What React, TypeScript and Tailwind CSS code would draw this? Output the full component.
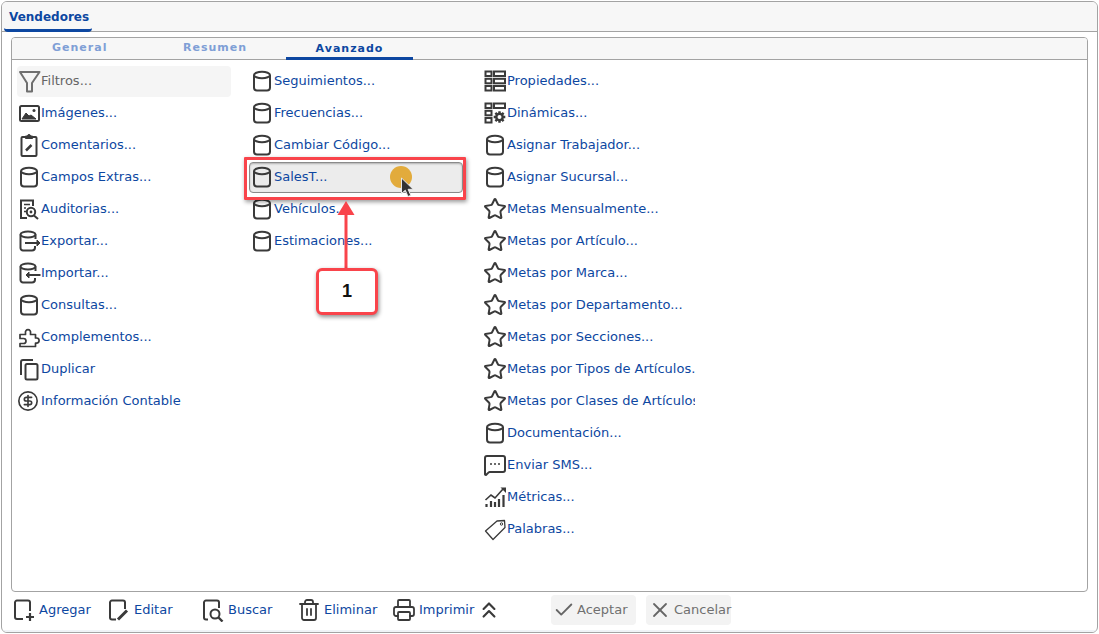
import type { ReactNode } from 'react';
import { ChevronsUp, Check, X, Printer, Trash2, CircleDollarSign, MessageSquareMore, Star } from 'lucide-react';

const ink = '#3a3a3a';

function Svg({ children, size = 24, color = ink }: { children: ReactNode; size?: number; color?: string }) {
    return (
        <svg width={size} height={size} viewBox="0 0 24 24" fill="none" stroke={color} strokeWidth="2" className="shrink-0">
            {children}
        </svg>
    );
}

const Cylinder = () => (
    <Svg>
        <ellipse cx="12" cy="6" rx="8" ry="3.2" />
        <path d="M4 6v12.5a3 3 0 0 0 3 3h10a3 3 0 0 0 3-3V6" />
    </Svg>
);

const Funnel = () => (
    <Svg color="#6f6f6f">
        <path d="M3 3h19.5l-7.5 11v8.5h-5V14z" strokeLinejoin="round" />
    </Svg>
);

const ImageIcon = () => (
    <Svg>
        <rect x="3" y="5" width="19" height="15" rx="1.5" />
        <path d="M5 18l4-6 3 3 2-1 5 4z" fill={ink} strokeWidth="1" />
        <circle cx="17" cy="9.5" r="1.5" fill={ink} stroke="none" />
    </Svg>
);

const Clipboard = () => (
    <Svg>
        <path d="M8 4H5.5a1 1 0 0 0-1 1v17a1 1 0 0 0 1 1h13a1 1 0 0 0 1-1V5a1 1 0 0 0-1-1H16" />
        <path d="M8.5 5.5V3h2a1.5 1.5 0 0 1 3 0h2v2.5z" fill={ink} strokeWidth="1" />
        <path d="M9 17.5l5.5-5.5" strokeWidth="2.5" />
    </Svg>
);

const Audit = () => (
    <Svg>
        <path d="M10 21H4V3.5h12V9" strokeWidth="2" />
        <path d="M7 7.5h6M7 11h2M7 14.5h2" strokeWidth="1.5" />
        <circle cx="14" cy="15" r="4.2" />
        <circle cx="14" cy="15" r="1.4" fill={ink} stroke="none" />
        <path d="M17 18.5l4 3.5" />
    </Svg>
);

const ExportIcon = () => (
    <Svg>
        <ellipse cx="11" cy="5.5" rx="7.5" ry="3" />
        <path d="M3.5 5.5V19a2.5 2.5 0 0 0 2.5 2.5h9a3 3 0 0 0 3-3V17M18.5 5.5V10M3.5 5.5" />
        <path d="M8 14h13.5" strokeWidth="2" />
        <path d="M20 11l3 3-3 3z" fill={ink} strokeWidth="1" />
    </Svg>
);

const ImportIcon = () => (
    <Svg>
        <ellipse cx="11" cy="5.5" rx="7.5" ry="3" />
        <path d="M3.5 5.5V19a2.5 2.5 0 0 0 2.5 2.5h9a3 3 0 0 0 3-3V17M18.5 5.5V10" />
        <path d="M10 14h13.5" />
        <path d="M12 11l-3 3 3 3z" fill={ink} strokeWidth="1" />
    </Svg>
);

const PuzzleIcon = () => (
    <Svg>
        <path
            d="M3 13.5V9.5h5.5V8A2.6 2.6 0 1 1 13.5 8v1.5h5v3.5h1a2.6 2.6 0 0 1 0 5.2h-1V21.5H3v-3h3.5a2.3 2.3 0 0 0 0-5z"
            strokeWidth="1.7"
            strokeLinejoin="round"
        />
    </Svg>
);

const Duplicate = () => (
    <Svg>
        <path d="M4 18V5a2 2 0 0 1 2-2h10" />
        <rect x="8.5" y="7" width="12" height="15.5" rx="1.5" />
    </Svg>
);

const Props = () => (
    <Svg>
        <rect x="2.5" y="2.5" width="6" height="4.5" strokeWidth="2" />
        <rect x="11" y="2.5" width="11" height="4.5" strokeWidth="2" />
        <rect x="2.5" y="9.8" width="6" height="4.5" strokeWidth="2" />
        <rect x="11" y="9.8" width="11" height="4.5" strokeWidth="2" />
        <rect x="2.5" y="17" width="6" height="4.5" strokeWidth="2" />
        <rect x="11" y="17" width="11" height="4.5" strokeWidth="2" />
    </Svg>
);

const Dynamics = () => (
    <Svg>
        <rect x="2.5" y="2.5" width="6" height="4.5" strokeWidth="2" />
        <rect x="11" y="2.5" width="11" height="4.5" strokeWidth="2" />
        <rect x="2.5" y="9.8" width="6" height="4.5" strokeWidth="2" />
        <rect x="2.5" y="17" width="6" height="4.5" strokeWidth="2" />
        <circle cx="16.5" cy="16" r="3.2" strokeWidth="2.4" />
        <path
            d="M16.5 10.2v2.4M16.5 19.4v2.4M10.7 16h2.4M19.9 16h2.4M12.4 11.9l1.7 1.7M18.9 18.4l1.7 1.7M12.4 20.1l1.7-1.7M18.9 13.6l1.7-1.7"
            strokeWidth="2.4"
        />
    </Svg>
);

const Metrics = () => (
    <Svg>
        <path d="M3.5 22v-3M8 22v-6M12 22v-5M16 22v-8M20.5 22V10" strokeWidth="2.2" />
        <path d="M2.5 15l5.5-5 4 3 8-9" strokeWidth="1.6" />
        <path d="M17.5 2.5H23V8z" fill={ink} stroke="none" />
    </Svg>
);

const Tag = () => (
    <Svg>
        <path d="M2.5 14L14 4l7.5-.5.5 7L10 22.5z" strokeWidth="1.3" strokeLinejoin="round" />
        <circle cx="18.5" cy="7" r="1.2" strokeWidth="1" />
    </Svg>
);

const Add = () => (
    <Svg>
        <path d="M11 21H5a2 2 0 0 1-2-2V4.500a2 2 0 0 1 2-2h11a2 2 0 0 1 2 2V13" />
        <path d="M18 15v8M14 19h8" strokeWidth="2.2" />
    </Svg>
);

const Edit = () => (
    <Svg>
        <path d="M9 21.500H5a2 2 0 0 1-2-2V4.500a2 2 0 0 1 2-2h11a2 2 0 0 1 2 2V11" />
        <path d="M11 21.500l9-9" strokeWidth="3" />
    </Svg>
);

const Search = () => (
    <Svg>
        <path d="M7 21.500H5a2 2 0 0 1-2-2V4.500a2 2 0 0 1 2-2h11a2 2 0 0 1 2 2V10" />
        <circle cx="14" cy="16" r="4.500" />
        <path d="M17.500 19.500L21.500 23.500" strokeWidth="2.4" />
    </Svg>
);

type Item = { label: string; icon: ReactNode; state?: 'disabled' | 'hover'; clip?: boolean };

const star = <Star size={24} color={ink} strokeWidth={2} className="shrink-0" />;
const db = <Cylinder />;

const col1: Item[] = [
    { label: 'Filtros...', icon: <Funnel />, state: 'disabled' },
    { label: 'Imágenes...', icon: <ImageIcon /> },
    { label: 'Comentarios...', icon: <Clipboard /> },
    { label: 'Campos Extras...', icon: db },
    { label: 'Auditorias...', icon: <Audit /> },
    { label: 'Exportar...', icon: <ExportIcon /> },
    { label: 'Importar...', icon: <ImportIcon /> },
    { label: 'Consultas...', icon: db },
    { label: 'Complementos...', icon: <PuzzleIcon /> },
    { label: 'Duplicar', icon: <Duplicate /> },
    { label: 'Información Contable', icon: <CircleDollarSign size={22} color={ink} strokeWidth={1.8} className="shrink-0 mr-[2px]" /> },
];

const col2: Item[] = [
    { label: 'Seguimientos...', icon: db },
    { label: 'Frecuencias...', icon: db },
    { label: 'Cambiar Código...', icon: db },
    { label: 'SalesT...', icon: db, state: 'hover' },
    { label: 'Vehículos...', icon: db },
    { label: 'Estimaciones...', icon: db },
];

const col3: Item[] = [
    { label: 'Propiedades...', icon: <Props /> },
    { label: 'Dinámicas...', icon: <Dynamics /> },
    { label: 'Asignar Trabajador...', icon: db },
    { label: 'Asignar Sucursal...', icon: db },
    { label: 'Metas Mensualmente...', icon: star },
    { label: 'Metas por Artículo...', icon: star },
    { label: 'Metas por Marca...', icon: star },
    { label: 'Metas por Departamento...', icon: star },
    { label: 'Metas por Secciones...', icon: star },
    { label: 'Metas por Tipos de Artículos...', icon: star },
    { label: 'Metas por Clases de Artículos...', icon: star },
    { label: 'Documentación...', icon: db },
    { label: 'Enviar SMS...', icon: <MessageSquareMore size={24} color={ink} strokeWidth={2} className="shrink-0" /> },
    { label: 'Métricas...', icon: <Metrics /> },
    { label: 'Palabras...', icon: <Tag /> },
];

function MenuRow({ item }: { item: Item }) {
    let style = 'text-[#0d47a1]';
    if (item.state === 'disabled') style = 'text-[#666666] bg-[#f5f5f5] rounded-sm w-[210px]';
    if (item.state === 'hover') {
        style = 'text-[#0d47a1] bg-[#ececec] border border-[#8a8a8a] rounded-sm shadow-[inset_0_1px_2px_#b0b0b0] -ml-[1px]';
    }
    return (
        <div className="h-8 flex items-center">
            <div className={`h-[31px] w-full flex items-center overflow-hidden whitespace-nowrap ${style}`}>
                {item.icon}
                <span className="min-w-0">{item.label}</span>
            </div>
        </div>
    );
}

function ToolButton({ icon, label, width }: { icon: ReactNode; label: string; width: string }) {
    return (
        <div className={`flex items-center gap-[3px] shrink-0 text-[#0d47a1] ${width}`}>
            {icon}
            <span>{label}</span>
        </div>
    );
}

function ActionButton({ icon, label }: { icon: ReactNode; label: string }) {
    return (
        <div className="w-[85px] h-[30px] flex items-center gap-[2px] pl-[2px] bg-[#f3f3f3] rounded-sm text-[#707070] shrink-0">
            {icon}
            <span>{label}</span>
        </div>
    );
}

function Annotation() {
    return (
        <>
            <div className="absolute left-[244px] top-[157px] w-[222px] h-[43px] border-[3px] border-[#f9444b] rounded-[1px] shadow-[1px_2px_4px_rgba(0,0,0,0.4)]" />
            <svg className="absolute left-[332px] top-[198px]" width="28" height="74" viewBox="0 0 28 74">
                <path d="M12.500 16h3v56h-3z" fill="#f9444b" />
                <path d="M14 3l8.500 14H5.500z" fill="#f9444b" />
            </svg>
            <div className="absolute left-[316px] top-[268px] w-[62px] h-[47px] bg-white border-[3px] border-[#f9444b] rounded-md shadow-[1px_2px_4px_rgba(0,0,0,0.45)] flex items-center justify-center font-['Liberation_Sans',sans-serif] font-bold text-[18px] text-[#111]">
                1
            </div>
            <div className="absolute left-[390px] top-[166px] w-[22px] h-[22px] rounded-full bg-[#e2ab3c]" />
            <svg className="absolute left-[400px] top-[177px]" width="16" height="22" viewBox="0 0 16 22">
                <path d="M1.500 1v15.500l3.800-3.300 2.700 6.300 2.800-1.200-2.700-6h5z" fill="#333" stroke="#e8e8e8" strokeWidth="1" />
            </svg>
        </>
    );
}

export default function App() {
    return (
        <div className="relative w-[1099px] h-[634px] bg-white pt-[1px] pl-[1px] font-['DejaVu_Sans',sans-serif] text-[13px] overflow-hidden">
            <div className="w-[1097px] h-[632px] border border-[#a3a3a3] rounded-md overflow-hidden flex flex-col bg-white">
                <div className="h-[30px] shrink-0 border-b border-[#a3a3a3] bg-[#f7f7f7] pl-[2px] flex items-end">
                    <div className="w-[88px] h-[30px] -mb-[1px] border-b-[3px] border-[#0d47a1] rounded-b-sm pl-[5px] pt-[8px] font-bold text-[12px] leading-[15px] text-[#0d47a1]">
                        Vendedores
                    </div>
                </div>

                <div className="mx-[9px] mt-[5px] h-[555px] shrink-0 border border-[#a3a3a3] rounded-[4px] overflow-hidden flex flex-col">
                    <div className="h-[22px] shrink-0 border-b border-[#a3a3a3] bg-[#f7f7f7] flex items-end font-bold text-[11px] tracking-[1px] leading-[20px]">
                        <div className="w-[126px] pl-[40px] h-[21px] text-[#7f9fd6]">General</div>
                        <div className="w-[148px] pl-[45px] h-[21px] text-[#7f9fd6]">Resumen</div>
                        <div className="w-[127px] h-[21px] -mb-[1px] border-b-[3px] border-[#0d47a1] text-center text-[#0d47a1] ml-[0px]">Avanzado</div>
                    </div>
                    <div className="flex pl-[5px] pt-[5px] gap-[19px]">
                        <div className="w-[214px] shrink-0">
                            {col1.map((item) => <MenuRow key={item.label} item={item} />)}
                        </div>
                        <div className="w-[214px] shrink-0">
                            {col2.map((item) => <MenuRow key={item.label} item={item} />)}
                        </div>
                        <div className="w-[212px] shrink-0">
                            {col3.map((item) => <MenuRow key={item.label} item={item} />)}
                        </div>
                    </div>
                </div>

                <div className="flex-1 flex items-center pl-[10px] pb-[2px] border-b-[2px] border-[#f0f3f7]">
                    <ToolButton icon={<Add />} label="Agregar" width="w-[95px]" />
                    <ToolButton icon={<Edit />} label="Editar" width="w-[94px]" />
                    <ToolButton icon={<Search />} label="Buscar" width="w-[96px]" />
                    <ToolButton icon={<Trash2 size={24} color={ink} strokeWidth={1.8} className="shrink-0" />} label="Eliminar" width="w-[95px]" />
                    <ToolButton icon={<Printer size={24} color={ink} strokeWidth={1.8} className="shrink-0" />} label="Imprimir" width="w-[84px]" />
                    <ChevronsUp size={26} color={ink} strokeWidth={2} className="shrink-0 mr-[49px]" />
                    <ActionButton icon={<Check size={22} color="#666666" strokeWidth={2} className="shrink-0" />} label="Aceptar" />
                    <div className="w-[10px] shrink-0" />
                    <ActionButton icon={<X size={24} color="#666666" strokeWidth={1.8} className="shrink-0" />} label="Cancelar" />
                </div>
            </div>
            <Annotation />
        </div>
    );
}
